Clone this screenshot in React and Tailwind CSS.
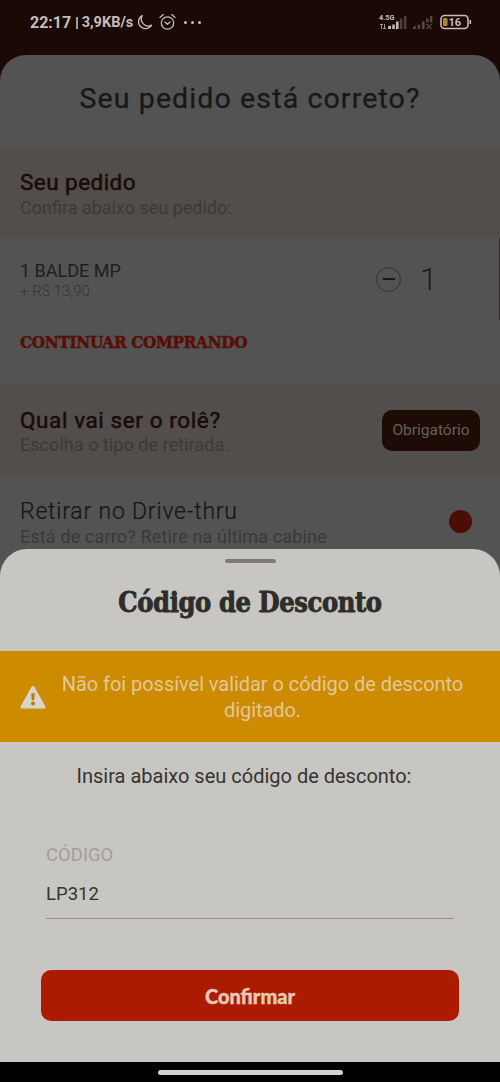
import React from "react";

const serif = "font-['DejaVu_Serif_Condensed','DejaVu_Serif',serif] font-bold [font-stretch:condensed]";

function StatusBar() {
  return (
    <div className="flex h-[55px] items-start justify-between pl-[30px] pr-[28px] pt-[12px] text-[#c4bebb]">
      <div className="flex h-5 items-center whitespace-nowrap font-bold">
        <span className="mt-[2px] text-[16px] leading-5">22:17</span>
        <span className="ml-[5px] mr-[4px] mt-[2px] h-[12px] w-[1.5px] bg-[#a39c99]" />
        <span className="mt-[2px] text-[14.5px] leading-5">3,9KB/s</span>
        <svg className="ml-[3px]" width="17" height="17" viewBox="0 0 17 17" fill="none" stroke="currentColor" strokeWidth="1.3" strokeLinejoin="round">
          <path d="M6.3 1.5A7 7 0 1 0 15.6 11.2 7 7 0 0 1 6.3 1.5Z" />
        </svg>
        <svg className="ml-[6px]" width="17" height="18" viewBox="0 0 17 18" fill="none" stroke="currentColor" strokeWidth="1.3" strokeLinecap="round" strokeLinejoin="round">
          <circle cx="8.5" cy="10" r="6.2" />
          <path d="M1 4.400 4.300 1.600M16 4.400 12.700 1.600M6 9l2.500 2.200L11 9" />
        </svg>
        <span className="ml-[8px] flex gap-[4px]">
          <i className="size-[3px] rounded-full bg-[#c4bebb]" />
          <i className="size-[3px] rounded-full bg-[#c4bebb]" />
          <i className="size-[3px] rounded-full bg-[#c4bebb]" />
        </span>
      </div>
      <div className="flex h-5 items-center">
        <svg width="28" height="18" viewBox="0 0 28 18" fill="currentColor">
          <text x="0" y="7" fontSize="7.5" fontWeight="700" textLength="15.500" lengthAdjust="spacingAndGlyphs">4.5G</text>
          <path d="M2 11h1v5H2zM1 11h3v1H1zM5 11h1v5H5zM4 15h3v1H4z" opacity=".8" />
          <path d="M9 13.500l3-1V16H9zM13.300 11.500h2.500V16h-2.500zM17 8.500h2.600V16H17z" />
          <path d="M20.800 5.500h2.500V16h-2.500zM24.900 3h2.500v13h-2.500z" opacity=".3" />
        </svg>
        <svg className="ml-[6px]" width="20" height="18" viewBox="0 0 20 18" fill="currentColor" opacity=".35">
          <path d="M0 14l2.700-1.500V16H0zM4.600 11.500h2.600V16H4.600zM9 8.500h2.600V16H9zM13.200 5.500h2.400v4h-2.400zM17 3h2.400v6.500H17z" />
          <path d="M13.500 11l5 5M18.500 11l-5 5" stroke="currentColor" strokeWidth="1.4" />
        </svg>
        <svg className="ml-[7px]" width="32" height="16" viewBox="0 0 32 16">
          <rect x="1" y="1.5" width="27" height="13" rx="3.5" fill="none" stroke="currentColor" strokeWidth="1.6" />
          <path d="M29.500 6h1.600v4h-1.600z" fill="currentColor" />
          <rect x="3" y="4" width="4.5" height="8" rx="1" fill="#b08a20" />
          <text x="8.5" y="12" fontSize="11" fontWeight="700" fill="currentColor">16</text>
        </svg>
      </div>
    </div>
  );
}

function OrderPage() {
  return (
    <main className="flex flex-1 flex-col overflow-hidden rounded-t-[26px] bg-[#535353]">
      <h1 className="h-[92px] whitespace-nowrap pt-[26px] text-center text-[28.5px] leading-[36px] tracking-[1.12px] text-[#181818] [-webkit-text-stroke:0.3px]">
        Seu pedido está correto?
      </h1>
      <section className="h-[91px] bg-[#514e4b] px-[20px] pt-[21px]">
        <h2 className="text-[22.5px] leading-[28px] tracking-[0.45px] text-[#1b0b07] [-webkit-text-stroke:0.5px]">Seu pedido</h2>
        <p className="mt-px text-[18px] leading-[22px] text-[#3c3a38]">Confira abaixo seu pedido:</p>
      </section>
      <section className="flex h-[147px] flex-col justify-between border-b border-[#504a48] pb-[31px]">
        <div className="flex justify-between pl-[20px]">
          <div className="pt-[22px]">
            <h3 className="text-[18px] leading-[22px] text-[#1e1e1e]">1 BALDE MP</h3>
            <p className="text-[15px] font-light leading-[18px] text-[#343434]">+ R$ 13,90</p>
          </div>
          <div className="flex">
            <div className="mt-[28px] flex h-[26px] items-center">
              <span className="flex size-[25px] items-center justify-center rounded-full border border-[#333]">
                <i className="h-[2px] w-[12px] bg-[#181818]" />
              </span>
              <span className="ml-[19px] mt-[2px] w-[16px] text-[31px] font-light leading-[26px] text-[#1c1c1c]">1</span>
            </div>
            <i className="ml-[63px] h-[82px] w-px bg-[#382420]" />
          </div>
        </div>
        <a className={`${serif} whitespace-nowrap pl-[20px] text-[17px] leading-[22px] tracking-[-0.35px] text-[#580e06] [-webkit-text-stroke:0.5px]`}>CONTINUAR COMPRANDO</a>
      </section>
      <section className="flex h-[91px] items-center justify-between bg-[#514e4b] px-[20px]">
        <div>
          <h2 className="text-[22.5px] leading-[28px] tracking-[0.6px] text-[#1b0b07] [-webkit-text-stroke:0.5px]">Qual vai ser o rolê?</h2>
          <p className="text-[18px] leading-[22px] tracking-[0.05px] text-[#3c3a38]">Escolha o tipo de retirada.</p>
        </div>
        <span className="flex h-[41px] w-[98px] items-center justify-center rounded-[10px] bg-[#1e0b06] pt-px text-[15.5px] text-[#65605d]">Obrigatório</span>
      </section>
      <section className="flex justify-between pl-[20px] pr-[28px] pt-[22px]">
        <div>
          <h3 className="text-[23px] font-light leading-[28px] tracking-[0.8px] text-[#161616] [-webkit-text-stroke:0.2px]">Retirar no Drive-thru</h3>
          <p className="text-[18px] leading-[22px] tracking-[0.15px] text-[#393939]">Está de carro? Retire na última cabine</p>
        </div>
        <i className="mt-[12px] size-[23px] rounded-full bg-[#4b0d04]" />
      </section>
    </main>
  );
}

function DiscountSheet() {
  return (
    <div className="absolute inset-x-0 bottom-0 flex h-[533px] flex-col">
      <section className="flex flex-1 flex-col overflow-hidden rounded-t-[27px] bg-[#c8c6c2]">
        <i className="mt-[10px] h-[4px] w-[51px] shrink-0 self-center rounded-full bg-[#7d7a77]" />
        <h2 className={`${serif} mt-[22px] h-[66px] whitespace-nowrap text-center text-[27px] leading-[36px] tracking-[-0.4px] text-[#2e2d2a] [-webkit-text-stroke:0.8px]`}>
          Código de Desconto
        </h2>
        <div className="flex h-[91px] shrink-0 items-center bg-[#cd8b00] pl-[20px] pr-[21px]">
          <svg className="shrink-0" width="26" height="24" viewBox="0 0 26 24">
            <path d="M11.600 1.800a1.600 1.600 0 0 1 2.800 0L25.400 21.500a1.200 1.200 0 0 1-1 1.900H1.600a1.200 1.200 0 0 1-1-1.900Z" fill="#d9d5cd" />
            <path d="M11.200 8.300h3.600l-.6 7h-2.400Z" fill="#b77d0b" />
            <circle cx="13" cy="18.500" r="2" fill="#b77d0b" />
          </svg>
          <p className="flex-1 pt-px text-center text-[20px] leading-[26px] tracking-[-0.05px] text-[#e2c79a]">
            Não foi possível validar o código de desconto<br />digitado.
          </p>
        </div>
        <p className="mr-[12px] mt-[21px] text-center text-[20px] leading-[26px] text-[#363431]">Insira abaixo seu código de desconto:</p>
        <label className="mx-[46px] mt-[53px] flex flex-col border-b border-[#9b8e88] pb-[11px]">
          <span className="text-[18.5px] leading-[26px] text-[#a69c97]">CÓDIGO</span>
          <span className="mt-[13px] text-[18.5px] leading-[26px] text-[#363431]">LP312</span>
        </label>
        <button className="mx-[41px] mt-[51px] h-[51px] rounded-[10px] bg-[#ab1b00] font-['Lato',sans-serif] text-[20px] font-black text-[#e6c9b4] [-webkit-text-stroke:0.4px]">Confirmar</button>
      </section>
      <div className="flex h-[20px] items-center justify-center bg-black">
        <i className="h-[5px] w-[185px] rounded-full bg-[#d2d2d2]" />
      </div>
    </div>
  );
}

export default function App() {
  return (
    <div className="relative flex h-[1082px] w-[500px] flex-col overflow-hidden bg-[#1a0905] font-['Roboto',sans-serif]">
      <StatusBar />
      <OrderPage />
      <DiscountSheet />
    </div>
  );
}
